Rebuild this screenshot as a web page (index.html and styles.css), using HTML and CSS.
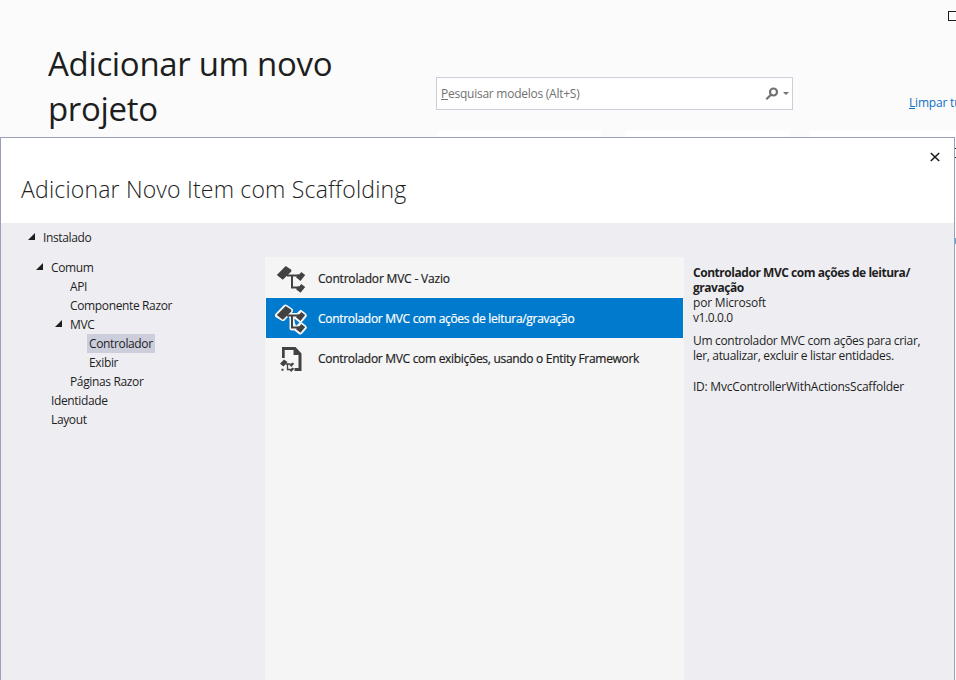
FILE: index.html
```
<!DOCTYPE html>
<html lang="pt-BR">
<head>
<meta charset="utf-8">
<title>Adicionar Novo Item com Scaffolding</title>
<link rel="stylesheet" href="styles.css">
</head>
<body>
<svg class="defs" aria-hidden="true">
  <symbol id="nodes" viewBox="0 0 32 32" overflow="visible">
    <path class="halo" d="M2.500 13.300 10.500 5l5 3.500-7.500 8zM14 13.500h9M17 14v12h5M21.500 15l4.300-4.300 3.500 2.800-4 4.500zM21.500 27l4.300-4.300 3.500 2.700-4 4.500z"/>
    <path class="wire" d="M12 13.500h11M17 13.500V25.500h6"/>
    <path class="ink" d="M1.800 13 10.700 4l5.600 3.800v1.700L7.800 17.700zM21 15.300l2-3h1.500L26.200 10l4 3-4.700 6zM21 27.300l2-3h1.500l1.700-2.300 4 3-4.700 5.700z"/>
  </symbol>
</svg>
<header class="window">
  <h1 class="heading">Adicionar um novo<br>projeto</h1>
  <div class="search">
    <span class="placeholder"><u>P</u>esquisar modelos (Alt+S)</span>
    <svg class="lens" viewBox="0 0 14 14"><circle cx="8.500" cy="5" r="3.500"/><path d="M6.200 7.500 1.300 12.300"/></svg>
    <span class="caret"></span>
  </div>
  <div class="side">
    <span class="maximize"></span>
    <a class="clear"><u>L</u>impar tudo</a>
  </div>
</header>
<div class="filters"><span></span><span></span><span></span></div>
<section class="dialog">
  <div class="titlebar">
    <h2 class="title">Adicionar Novo Item com Scaffolding</h2>
    <svg class="close" viewBox="0 0 10 10"><path d="M.8 1l8.400 8M9.200 1 .8 9"/></svg>
  </div>
  <div class="content">
    <nav class="tree">
      <div class="row root"><i class="arrow"></i><span>Instalado</span></div>
      <div class="row l1"><i class="arrow"></i><span>Comum</span></div>
      <div class="row l2"><span>API</span></div>
      <div class="row l2"><span>Componente Razor</span></div>
      <div class="row l2 open"><i class="arrow"></i><span>MVC</span></div>
      <div class="row l3"><span class="selected">Controlador</span></div>
      <div class="row l3"><span>Exibir</span></div>
      <div class="row l2"><span>Páginas Razor</span></div>
      <div class="row l1 leaf"><span>Identidade</span></div>
      <div class="row l1 leaf"><span>Layout</span></div>
    </nav>
    <div class="list">
      <div class="item short"><svg class="icon"><use href="#nodes"/></svg><span>Controlador MVC - Vazio</span></div>
      <div class="item active"><svg class="icon"><use href="#nodes"/></svg><span>Controlador MVC com ações de leitura/gravação</span></div>
      <div class="item"><svg class="icon" viewBox="0 0 32 32">
        <path class="halo" d="M8 16V6h12l6 6v12.500h-6"/>
        <path class="ink" d="M7 5h13.500l6 6.500V29h-7v-3h4V13h-5V8H9.700v8H7z"/>
        <path class="ink" d="M5 21.700 9 17.500l3.500 2.500-4 4.500zM14.500 23l3-2.500 1.700 1.300-3 3.200zM14.500 28l3-2.500 1.700 1.300-3 3.200zM6.500 26.700h2v2h-2z"/>
        <path class="thin" d="M10.500 22h5M12.500 22v5.500h3"/>
      </svg><span>Controlador MVC com exibições, usando o Entity Framework</span></div>
    </div>
    <aside class="details">
      <strong class="name">Controlador MVC com ações de leitura/<br>gravação</strong>
      <span>por Microsoft</span>
      <span class="version">v1.0.0.0</span>
      <p class="about">Um controlador MVC com ações para criar,<br>ler, atualizar, excluir e listar entidades.</p>
      <span class="ident">ID: MvcControllerWithActionsScaffolder</span>
    </aside>
  </div>
</section>
<div class="edge"><i class="edge-box"></i><i class="edge-link"></i></div>
</body>
</html>
```

FILE: styles.css
```
* { box-sizing: border-box; }
body {
  margin: 0;
  width: 956px;
  height: 680px;
  overflow: hidden;
  position: relative;
  background: #fbfbfb;
  color: #1e1e1e;
  font: 12px/15px "Open Sans", "Noto Sans", sans-serif;
  letter-spacing: -0.2px;
}
.defs { position: absolute; width: 0; height: 0; }
.window { display: flex; height: 131px; }
.heading {
  margin: 0;
  padding: 41px 0 0 48px;
  width: 436px;
  font-size: 33px;
  line-height: 45px;
  font-weight: 400;
  letter-spacing: -0.33px;
}
.search {
  display: flex;
  align-items: center;
  width: 357px;
  height: 33px;
  margin-top: 77px;
  padding: 0 3px 0 4px;
  background: #fff;
  border: 1px solid #cccedb;
}
.placeholder { flex: 1; color: #717171; letter-spacing: -0.25px; }
.lens { width: 14px; height: 14px; margin-right: 4px; fill: none; stroke: #717171; stroke-width: 2.2; }
.caret { border: 3px solid transparent; border-top-color: #717171; border-bottom: 0; }
.side { display: flex; flex-direction: column; width: 163px; overflow: hidden; }
.maximize { width: 12px; height: 10px; margin: 11px 0 0 155px; border: 1px solid #1e1e1e; flex: none; }
.clear { margin: 74px 0 0 116px; color: #0e70c0; white-space: nowrap; }
.filters { display: flex; gap: 24px; padding-left: 437px; height: 7px; }
.filters span { flex: 0 0 164px; background: #fff; }
.filters span:last-child { margin-left: -3px; }
.dialog {
  position: absolute;
  left: 0;
  top: 137px;
  width: 955px;
  height: 560px;
  border: 1px solid #9b9fb9;
  background: #eeeef2;
}
.titlebar { display: flex; justify-content: space-between; height: 85px; background: #fff; }
.title { margin: 0; padding: 33px 0 0 20px; font-size: 23px; line-height: 36px; font-weight: 300; letter-spacing: 0.19px; }
.close { width: 10px; height: 10px; margin: 14px 14px 0 0; fill: none; stroke: #1e1e1e; stroke-width: 1.6; }
.content { display: flex; height: 475px; }
.tree { width: 264px; padding-top: 5px; letter-spacing: -0.36px; }
.row { display: flex; align-items: center; height: 19px; }
.row span { line-height: 19px; }
.arrow { width: 7px; height: 7px; background: #1e1e1e; clip-path: polygon(100% 0, 100% 100%, 0 100%); margin: 0 8px 2px 0; }
.root { padding-left: 27px; margin-bottom: 11px; }
.l1 { padding-left: 35px; }
.leaf { padding-left: 50px; }
.l2 { padding-left: 69px; }
.open { padding-left: 54px; }
.l3 { padding-left: 88px; }
.selected { margin-left: -2px; padding: 0 2px; background: #cccedb; }
.list { width: 419px; margin-top: 34px; padding: 1px 1px 0; background: #f5f5f5; }
.item { display: flex; align-items: center; height: 40px; padding-left: 9px; letter-spacing: -0.3px; -webkit-text-stroke: 0.2px; }
.item span { padding-top: 1px; }
.short { letter-spacing: -0.19px; }
.active { background: #007acc; color: #fff; }
.icon { width: 32px; height: 32px; margin-right: 11px; overflow: visible; }
.halo { fill: #f6f6f6; stroke: #f6f6f6; stroke-width: 5; stroke-linejoin: round; }
.ink { fill: #424242; }
.wire { fill: none; stroke: #424242; stroke-width: 2; }
.thin { fill: none; stroke: #424242; stroke-width: 1.300; }
.details { display: flex; flex-direction: column; padding: 42px 0 0 9px; white-space: nowrap; }
.name { letter-spacing: -0.46px; }
.about { margin: 8px 0 16px; letter-spacing: -0.32px; }
.ident { letter-spacing: -0.24px; }
.version { letter-spacing: -0.4px; }
.edge { position: absolute; left: 955px; top: 137px; width: 1px; height: 120px; display: flex; flex-direction: column; background: #fbfbfb; }
.edge-box { height: 10px; margin-top: 11px; border: solid #1e1e1e; border-width: 1px 0; }
.edge-link { height: 6px; margin-top: 80px; background: #55aede; }
```
